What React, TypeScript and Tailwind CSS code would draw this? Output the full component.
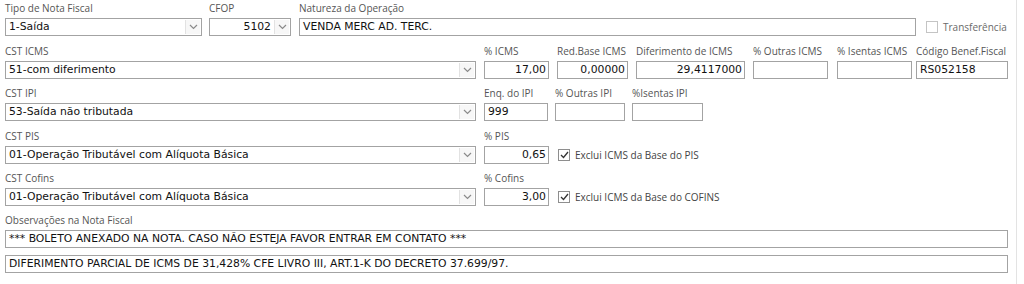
import type { ReactNode } from "react";

const labelFont = { fontFamily: '"Open Sans", "Noto Sans", sans-serif' };
const inputFont = { fontFamily: '"DejaVu Sans", Verdana, sans-serif' };

function Label({ children }: { children: ReactNode }) {
  return (
    <div className="h-[12px] mb-[4px] text-[10px] leading-[12px] text-[#555] whitespace-nowrap" style={labelFont}>
      {children}
    </div>
  );
}

function Box({ value, right, className = "" }: { value?: string; right?: boolean; className?: string }) {
  return (
    <div
      className={`h-[18px] border border-[#a3a3a3] bg-white text-[10.8px] leading-[16px] text-[#111] px-[3px] whitespace-nowrap overflow-hidden ${right ? "text-right pr-[2px]" : ""} ${className}`}
      style={inputFont}
    >
      {value}
    </div>
  );
}

function Chevron() {
  return (
    <svg width="9" height="6" viewBox="0 0 9 6" className="text-[#8a8a8a]">
      <path d="M1 1 L4.5 4.5 L8 1" fill="none" stroke="currentColor" strokeWidth="1.2" />
    </svg>
  );
}

function Select({ value, right, className = "" }: { value: string; right?: boolean; className?: string }) {
  return (
    <div className={`h-[18px] border border-[#a3a3a3] bg-white flex ${className}`}>
      <div
        className={`flex-1 text-[10.8px] leading-[16px] text-[#111] px-[3px] whitespace-nowrap overflow-hidden ${right ? "text-right" : ""}`}
        style={inputFont}
      >
        {value}
      </div>
      <div className="w-[15px] my-[1px] mr-[1px] border-l border-[#e2e2e2] bg-[#f7f7f7] flex items-center justify-center">
        <Chevron />
      </div>
    </div>
  );
}

function Field({ label, children, className = "" }: { label: string; children: ReactNode; className?: string }) {
  return (
    <div className={`flex flex-col ${className}`}>
      <Label>{label}</Label>
      {children}
    </div>
  );
}

function Check({ checked, label, disabled }: { checked?: boolean; label: string; disabled?: boolean }) {
  return (
    <div className="flex items-center h-[18px]">
      <div
        className={`w-[12px] h-[12px] border bg-white flex items-center justify-center ${disabled ? "border-[#c4c4c4]" : "border-[#8e8e8e]"}`}
      >
        {checked && (
          <svg width="9" height="8" viewBox="0 0 9 8">
            <path d="M1 4 L3.5 6.5 L8 1" fill="none" stroke="#333" strokeWidth="1.3" />
          </svg>
        )}
      </div>
      <span
        className={`ml-[5px] text-[10px] leading-[12px] whitespace-nowrap ${disabled ? "text-[#6a6a6a]" : "text-[#444]"}`}
        style={labelFont}
      >
        {label}
      </span>
    </div>
  );
}

export default function App() {
  return (
    <div className="w-[1024px] h-[284px] bg-white flex">
      <div className="w-[1017px] border-r border-[#e3e3e3] pl-[5px] pt-[2px]">
        <div className="flex items-end">
          <Field label="Tipo de Nota Fiscal" className="w-[197px]">
            <Select value="1-Saída" />
          </Field>
          <Field label="CFOP" className="w-[82px] ml-[7px]">
            <Select value="5102" right />
          </Field>
          <Field label="Natureza da Operação" className="w-[617px] ml-[8px]">
            <Box value="VENDA MERC AD. TERC." />
          </Field>
          <div className="ml-[10px]">
            <Check label="Transferência" disabled />
          </div>
        </div>

        <div className="flex items-end mt-[9px]">
          <Field label="CST ICMS" className="w-[471px]">
            <Select value="51-com diferimento" />
          </Field>
          <Field label="% ICMS" className="w-[65px] ml-[8px]">
            <Box value="17,00" right />
          </Field>
          <Field label="Red.Base ICMS" className="w-[71px] ml-[8px]">
            <Box value="0,00000" right />
          </Field>
          <Field label="Diferimento de ICMS" className="w-[109px] ml-[8px]">
            <Box value="29,4117000" right />
          </Field>
          <Field label="% Outras ICMS" className="w-[75px] ml-[8px]">
            <Box />
          </Field>
          <Field label="% Isentas ICMS" className="w-[75px] ml-[9px]">
            <Box />
          </Field>
          <Field label="Código Benef.Fiscal" className="w-[92px] ml-[4px]">
            <Box value="RS052158" />
          </Field>
        </div>

        <div className="flex items-end mt-[8px]">
          <Field label="CST IPI" className="w-[471px]">
            <Select value="53-Saída não tributada" />
          </Field>
          <Field label="Enq. do IPI" className="w-[64px] ml-[8px]">
            <Box value="999" />
          </Field>
          <Field label="% Outras IPI" className="w-[70px] ml-[7px]">
            <Box />
          </Field>
          <Field label="%Isentas IPI" className="w-[71px] ml-[7px]">
            <Box />
          </Field>
        </div>

        <div className="flex items-end mt-[9px]">
          <Field label="CST PIS" className="w-[471px]">
            <Select value="01-Operação Tributável com Alíquota Básica" />
          </Field>
          <Field label="% PIS" className="w-[65px] ml-[8px]">
            <Box value="0,65" right />
          </Field>
          <div className="ml-[9px]">
            <Check checked label="Exclui ICMS da Base do PIS" />
          </div>
        </div>

        <div className="flex items-end mt-[8px]">
          <Field label="CST Cofins" className="w-[471px]">
            <Select value="01-Operação Tributável com Alíquota Básica" />
          </Field>
          <Field label="% Cofins" className="w-[65px] ml-[8px]">
            <Box value="3,00" right />
          </Field>
          <div className="ml-[9px]">
            <Check checked label="Exclui ICMS da Base do COFINS" />
          </div>
        </div>

        <Field label="Observações na Nota Fiscal" className="w-[1003px] mt-[8px]">
          <Box value="*** BOLETO ANEXADO NA NOTA. CASO NÃO ESTEJA FAVOR ENTRAR EM CONTATO ***" />
          <Box className="mt-[7px]" value="DIFERIMENTO PARCIAL DE ICMS DE 31,428% CFE LIVRO III, ART.1-K DO DECRETO 37.699/97." />
        </Field>
      </div>
    </div>
  );
}
